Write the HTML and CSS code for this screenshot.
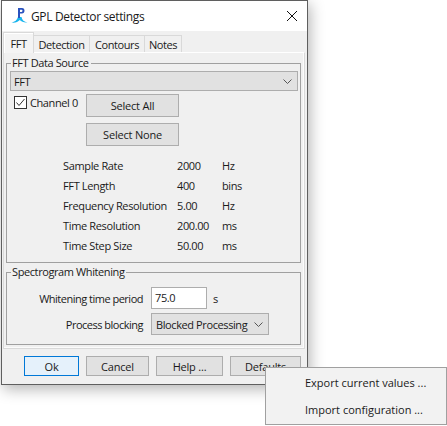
FILE: index.html
```html
<!DOCTYPE html>
<html>
  <head>
    <title>GPL Detector settings</title>
    <link rel="stylesheet" href="styles.css">
  </head>
  <body>
    <div class="window">
      <div class="titlebar">
        <svg class="app-icon" width="18" height="18" viewBox="0 0 18 18">
          <path d="M0.500 15.500 C4 15 6 13 7 10 L10.500 10 C11 13 13 15 16.500 15.500 C13 16 10.500 14.500 8.800 13 C7 15 4 16 0.500 15.500 Z" fill="#19b5ee"/>
          <path d="M7 11 L7 1 L11 1 C12.800 1 13.500 2.300 13.500 3.700 C13.500 5.200 12.500 6.500 11 6.500 L9 6.500 L9 11 Z M9 2.800 L9 4.900 L10.600 4.900 C11.800 4.900 11.800 2.800 10.600 2.800 Z" fill="#2a52be" fill-rule="evenodd"/>
        </svg>
        <span class="title">GPL Detector settings</span>
        <svg class="close-icon" width="12" height="12" viewBox="0 0 12 12">
          <path d="M1 1 L11 11 M11 1 L1 11" stroke="#111" stroke-width="1" fill="none"/>
        </svg>
      </div>
      <div class="body">
        <div class="tabs">
          <div class="tab active">FFT</div>
          <div class="tab detection">Detection</div>
          <div class="tab contours">Contours</div>
          <div class="tab notes">Notes</div>
        </div>
        <div class="pane">
          <fieldset class="group source">
            <legend>FFT Data Source</legend>
            <div class="combo wide">
              <span>FFT</span>
              <svg class="chevron" width="9" height="5" viewBox="0 0 9 5"><path d="M0.500 0.500 L4.500 4.500 L8.500 0.500" stroke="#555" fill="none"/></svg>
            </div>
            <div class="channels">
              <label class="check">
                <svg class="checkbox" width="13" height="13" viewBox="0 0 13 13">
                  <rect x="0.500" y="0.500" width="12" height="12" fill="#fff" stroke="#333"/>
                  <path d="M2.500 6.500 L5 9.500 L10.500 3" stroke="#333" fill="none"/>
                </svg>
                Channel 0
              </label>
              <div class="select-btns">
                <button class="btn select-all">Select All</button>
                <button class="btn select-none">Select None</button>
              </div>
            </div>
            <div class="stats">
              <span>Sample Rate</span><span>2000</span><span>Hz</span>
              <span>FFT Length</span><span>400</span><span>bins</span>
              <span>Frequency Resolution</span><span>5.00</span><span>Hz</span>
              <span>Time Resolution</span><span>200.00</span><span>ms</span>
              <span>Time Step Size</span><span>50.00</span><span>ms</span>
            </div>
          </fieldset>
          <fieldset class="group whitening">
            <legend>Spectrogram Whitening</legend>
            <div class="white-grid">
              <span class="white-label">Whitening time period</span>
              <div class="white-value"><div class="input">75.0</div><span>s</span></div>
              <span class="white-label">Process blocking</span>
              <div class="combo blocking">
                <span>Blocked Processing</span>
                <svg class="chevron" width="9" height="5" viewBox="0 0 9 5"><path d="M0.500 0.500 L4.500 4.500 L8.500 0.500" stroke="#555" fill="none"/></svg>
              </div>
            </div>
          </fieldset>
        </div>
        <div class="footer">
          <button class="btn ok">Ok</button>
          <button class="btn cancel">Cancel</button>
          <button class="btn help">Help ...</button>
          <button class="btn defaults">Defaults</button>
        </div>
      </div>
    </div>
    <div class="menu">
      <div class="menu-item">Export current values ...</div>
      <div class="menu-item">Import configuration ...</div>
    </div>
  </body>
</html>
```

FILE: styles.css
```css
html, body {
  margin: 0;
  padding: 0;
  background-color: #ffffff;
  overflow: hidden;
}

body {
  height: 426px;
  font-family: "Open Sans", "Liberation Sans", sans-serif;
  font-size: 11px;
  letter-spacing: -0.4px;
  color: #1a1a1a;
  white-space: nowrap;
}

.window {
  width: 307px;
  height: 385px;
  box-sizing: border-box;
  margin-left: 1px;
  border: 1px solid #5f5f5f;
  background-color: #f0f0f0;
  box-shadow: 2px 4px 14px rgba(0, 0, 0, 0.3);
}

.titlebar {
  height: 30px;
  background-color: #ffffff;
  display: flex;
  align-items: center;
  padding: 0 9px 0 9px;
}

.app-icon {
  margin-right: 2px;
}

.title {
  font-size: 12px;
  letter-spacing: -0.35px;
  flex: 1;
}

.body {
  padding: 1px 0 0 1px;
}

.tabs {
  display: flex;
  align-items: flex-end;
  height: 20px;
}

.tab {
  height: 17px;
  line-height: 17px;
  box-sizing: border-box;
  border: 1px solid #d9d9d9;
  border-bottom: none;
  margin-right: -1px;
  background-color: #f0f0f0;
  text-align: center;
}

.tab.active {
  height: 21px;
  line-height: 21px;
  width: 31px;
  position: relative;
  z-index: 1;
  margin-bottom: -1px;
  background-color: #f4f4f4;
  box-shadow: inset 1px 1px 0 #ffffff;
}

.tab.detection {
  width: 57px;
}

.tab.contours {
  width: 56px;
}

.tab.notes {
  width: 38px;
}

.pane {
  height: 297px;
  width: 302px;
  box-sizing: border-box;
  border: 1px solid #d9d9d9;
  border-top-color: #ffffff;
  box-shadow: inset -1px -1px 0 #fbfbfb;
  padding: 3px 2px;
}

.group {
  margin: 0;
  padding: 0;
  border: 1px solid #a0a0a0;
  min-width: 0;
  width: 295px;
  box-sizing: border-box;
}

.group legend {
  padding: 0 2px 0 1px;
  margin-left: 4px;
  line-height: 14px;
}

.source {
  height: 207px;
}

.whitening {
  height: 80px;
  margin-top: 2px;
}

.combo {
  display: flex;
  align-items: center;
  justify-content: space-between;
  box-sizing: border-box;
  background-color: #e1e1e1;
  border: 1px solid #adadad;
  padding: 0 5px 0 3px;
}

.combo.wide {
  height: 20px;
  margin: 1px 2px 0 3px;
}

.channels {
  display: flex;
  padding: 3px 0 0 7px;
}

.check {
  display: flex;
  align-items: flex-start;
  gap: 3px;
  width: 72px;
  padding-top: 2px;
  height: 16px;
  line-height: 13px;
}

.select-btns {
  display: flex;
  flex-direction: column;
  gap: 6px;
}

.btn {
  font-family: inherit;
  font-size: 11px;
  letter-spacing: -0.2px;
  color: #1a1a1a;
  background-color: #e1e1e1;
  border: 1px solid #adadad;
  padding: 0;
  margin: 0;
  box-sizing: border-box;
}

.select-all,
.select-none {
  width: 93px;
  height: 23px;
}

.stats {
  display: grid;
  grid-template-columns: 114px 45px auto;
  grid-auto-rows: 20px;
  align-items: center;
  padding: 9px 0 0 56px;
}

.stats span:nth-child(3n + 1) {
  letter-spacing: -0.35px;
}

.white-grid {
  display: grid;
  grid-template-columns: 136px auto;
  column-gap: 8px;
  row-gap: 4px;
  grid-auto-rows: 22px;
  padding-top: 8px;
  align-items: center;
}

.white-label {
  text-align: right;
  letter-spacing: -0.5px;
}

.white-value {
  display: flex;
  align-items: center;
  gap: 6px;
}

.input {
  width: 56px;
  height: 22px;
  line-height: 20px;
  box-sizing: border-box;
  border: 1px solid #adadad;
  background-color: #ffffff;
  padding-left: 3px;
}

.combo.blocking {
  width: 118px;
  height: 22px;
  padding: 0 5px 0 4px;
}

.footer {
  display: flex;
  padding: 7px 0 0 21px;
  gap: 7px;
}

.footer .btn {
  height: 20px;
}

.ok {
  width: 55px;
  background-color: #e5f1fb;
  border-color: #0078d7;
}

.cancel {
  width: 63px;
}

.help {
  width: 67px;
}

.defaults {
  width: 71px;
}

.menu {
  position: absolute;
  left: 265px;
  top: 367px;
  width: 182px;
  height: 58px;
  box-sizing: border-box;
  border: 1px solid #a0a0a0;
  background-color: #f2f2f2;
  padding-top: 1px;
  letter-spacing: 0;
}

.menu-item {
  height: 27px;
  line-height: 27px;
  padding-left: 39px;
}
```
